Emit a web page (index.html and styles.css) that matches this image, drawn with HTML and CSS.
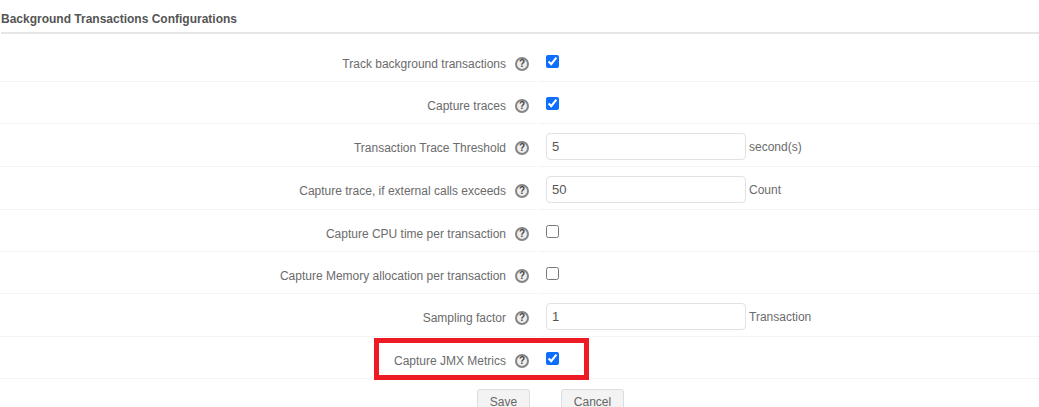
FILE: index.html
```html
<!DOCTYPE html>
<html lang="en">
<head>
    <meta charset="UTF-8">
    <title>Background Transactions Configurations</title>
    <link rel="stylesheet" href="styles.css">
</head>
<body>

<h2 class="section-title">Background Transactions Configurations</h2>

<form class="config-form">
    <div class="row row-check">
        <div class="label-cell"><label>Track background transactions</label><span class="help">?</span></div>
        <div class="field-cell"><input type="checkbox" checked></div>
    </div>
    <div class="row row-check">
        <div class="label-cell"><label>Capture traces</label><span class="help">?</span></div>
        <div class="field-cell"><input type="checkbox" checked></div>
    </div>
    <div class="row row-input">
        <div class="label-cell"><label>Transaction Trace Threshold</label><span class="help">?</span></div>
        <div class="field-cell"><input type="text" value="5"><span class="unit">second(s)</span></div>
    </div>
    <div class="row row-input">
        <div class="label-cell"><label>Capture trace, if external calls exceeds</label><span class="help">?</span></div>
        <div class="field-cell"><input type="text" value="50"><span class="unit">Count</span></div>
    </div>
    <div class="row row-check">
        <div class="label-cell"><label>Capture CPU time per transaction</label><span class="help">?</span></div>
        <div class="field-cell"><input type="checkbox"></div>
    </div>
    <div class="row row-check">
        <div class="label-cell"><label>Capture Memory allocation per transaction</label><span class="help">?</span></div>
        <div class="field-cell"><input type="checkbox"></div>
    </div>
    <div class="row row-input">
        <div class="label-cell"><label>Sampling factor</label><span class="help">?</span></div>
        <div class="field-cell"><input type="text" value="1"><span class="unit">Transaction</span></div>
    </div>
    <div class="row row-check">
        <div class="label-cell"><label>Capture JMX Metrics</label><span class="help">?</span></div>
        <div class="field-cell"><input type="checkbox" checked></div>
    </div>

    <div class="actions">
        <button type="button" class="btn-save">Save</button>
        <button type="button" class="btn-cancel">Cancel</button>
    </div>
</form>

<div class="highlight"></div>

</body>
</html>
```

FILE: styles.css
```css
html, body {
    height: 407px;
    overflow: hidden;
}

body {
    font-family: "Liberation Sans", Arial, sans-serif;
    font-size: 12px;
    color: #6b6b6b;
    background-color: #fff;
    margin: 0;
    padding: 0;
    position: relative;
}

.section-title {
    margin: 0 0 0 1px;
    height: 34px;
    padding-top: 11px;
    box-sizing: border-box;
    font-size: 12px;
    line-height: 16px;
    font-weight: bold;
    color: #555;
    border-bottom: 2px solid #e6e6e6;
}

.config-form {
    margin: 0;
}

.row {
    display: grid;
    grid-template-columns: 537px 1fr;
    column-gap: 2px;
}

.row-check {
    height: 42px;
}

.row-input {
    height: 43px;
}

.row:first-child {
    height: 48px;
}

.label-cell,
.field-cell {
    display: flex;
    align-items: center;
    border-bottom: 1px solid #f3f3f3;
    box-sizing: border-box;
}

.label-cell {
    justify-content: flex-end;
    padding-right: 8px;
    padding-top: 6px;
}

.row:first-child .label-cell {
    padding-top: 12px;
}

.label-cell label {
    margin-right: 9px;
}

.help {
    width: 10px;
    height: 10px;
    border: 2px solid #858585;
    border-radius: 50%;
    background-color: #eee;
    color: #444;
    font-size: 10px;
    font-weight: bold;
    line-height: 10px;
    text-align: center;
}

.field-cell {
    padding-left: 7px;
}

.field-cell input[type="checkbox"] {
    width: 13px;
    height: 13px;
    margin: 2px 0 0 0;
    accent-color: #0d6efd;
}

.row:first-child .field-cell input[type="checkbox"] {
    margin-top: 8px;
}

.field-cell input[type="text"] {
    width: 200px;
    height: 27px;
    box-sizing: border-box;
    margin-top: 2px;
    padding: 0 5px;
    border: 1px solid #e2e2e2;
    border-radius: 4px;
    font-family: "Liberation Sans", Arial, sans-serif;
    font-size: 13px;
    color: #555;
}

.unit {
    margin-left: 3px;
    margin-top: 4px;
}

.actions {
    display: flex;
    justify-content: flex-start;
    padding: 10px 0 0 477px;
    column-gap: 31px;
}

.actions button {
    height: 28px;
    box-sizing: border-box;
    padding: 0 0 3px 0;
    border: 1px solid #ddd;
    border-radius: 3px;
    background-color: #f3f3f3;
    font-family: "Liberation Sans", Arial, sans-serif;
    font-size: 12px;
    color: #666;
}

.btn-save {
    width: 53px;
}

.btn-cancel {
    width: 63px;
}

/* red annotation drawn over the JMX row */
.highlight {
    position: absolute;
    left: 374px;
    top: 338px;
    width: 215px;
    height: 42px;
    box-sizing: border-box;
    border: 5px solid #ed1c24;
}
```
